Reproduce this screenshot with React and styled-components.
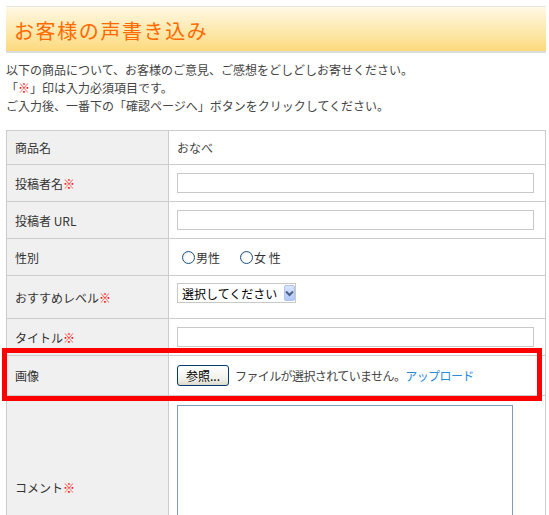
import React from 'react'
import styled, { createGlobalStyle } from 'styled-components'

const GlobalStyle = createGlobalStyle`
  body {
    margin: 0;
    background: #fff;
    color: #333;
    font-family: "Noto Sans CJK JP", "Noto Sans", sans-serif;
    font-size: 12px;
  }
`

const Page = styled.div`
  width: 540px;
  padding: 6px 0 0 6px;
`

const Header = styled.div`
  border-top: 1px solid #e6e6e6;
  border-bottom: 2px solid #dcdcdc;
  background: linear-gradient(#fff8e4, #fde7a8 60%, #fcd97c);
  display: flex;
  align-items: center;
  padding: 2px 0 0 8px;
  box-sizing: border-box;
  height: 47px;
`

const Title = styled.h1`
  margin: 0;
  font-size: 20px;
  font-weight: normal;
  letter-spacing: 1.6px;
  color: #ff6a00;
`

const Intro = styled.p`
  margin: 8px 0 15px;
  line-height: 18px;
  color: #444;
`

const Mark = styled.span`
  color: #f00;
`

const TableWrap = styled.div`
  position: relative;
`

const FormTable = styled.table`
  width: 540px;
  border-collapse: collapse;
  table-layout: fixed;
  border: 1px solid #cccccc;
`

const Label = styled.th`
  width: 145px;
  background: #f0f0f0;
  border: 1px solid #cccccc;
  text-align: left;
  font-weight: normal;
  color: #333;
  padding: 8px;
  line-height: 17px;
  vertical-align: middle;
`

const Value = styled.td`
  border: 1px solid #cccccc;
  padding: ${p => p.$pad || '8px'};
  line-height: 17px;
  color: #444;
  vertical-align: ${p => p.$top ? 'top' : 'middle'};
`

const TextInput = styled.input`
  display: block;
  width: 357px;
  height: 20px;
  box-sizing: border-box;
  border: 1px solid #c8c8c8;
  margin: 0;
  padding: 0 3px;
  font: inherit;
`

const RadioGroup = styled.div`
  display: flex;
  align-items: center;
  height: 20px;
  gap: 15px;
`

const RadioLabel = styled.label`
  display: flex;
  align-items: center;
  gap: 1px;
  color: #333;
`

const Radio = styled.input`
  appearance: none;
  width: 13px;
  height: 13px;
  margin: 0 0 0 5px;
  border: 1px solid #1c5180;
  border-radius: 50%;
  background: radial-gradient(circle at 60% 60%, #fff 40%, #dcdcd6 100%);
  box-sizing: border-box;
`

const SelectBox = styled.div`
  display: inline-flex;
  align-items: center;
  width: 119px;
  height: 20px;
  box-sizing: border-box;
  border: 1px solid #c8c8c8;
  padding: 0 1px 0 4px;
  gap: 5px;
  background: #fff;
`

const Select = styled.select`
  appearance: none;
  border: none;
  outline: none;
  background: transparent;
  font: inherit;
  color: #000;
  padding: 0;
  flex: 1;
`

const Arrow = styled.span`
  width: 16px;
  height: 16px;
  display: flex;
  align-items: center;
  justify-content: center;
  background: linear-gradient(#d9e5fd, #b1c7fa);
  border: 1px solid #b0c4f0;
  box-sizing: border-box;
  border-radius: 2px;
`

const FileRow = styled.div`
  display: flex;
  align-items: center;
  gap: 6px;
  height: 21px;
`

const BrowseButton = styled.button`
  width: 52px;
  height: 21px;
  border: 1px solid #003c74;
  border-radius: 3px;
  background: linear-gradient(#ffffff, #f0f0ea 70%, #dcd9cb);
  font: inherit;
  color: #000;
  padding: 0;
`

const FileNote = styled.span`
  color: #444;
  letter-spacing: -0.6px;
`

const Link = styled.a`
  color: #2a8bd6;
  text-decoration: none;
`

const Comment = styled.textarea`
  display: block;
  width: 336px;
  height: 166px;
  box-sizing: border-box;
  border: 1px solid #7f9db9;
  margin: 0;
  resize: none;
`

const Highlight = styled.div`
  position: absolute;
  left: -4px;
  top: 218px;
  width: 540px;
  height: 53px;
  box-sizing: border-box;
  border: 5px solid #ff0000;
  pointer-events: none;
`

const Req = () => <Mark>※</Mark>

export default function App() {
  return (
    <>
      <GlobalStyle />
      <Page>
        <Header>
          <Title>お客様の声書き込み</Title>
        </Header>
        <Intro>
          以下の商品について、お客様のご意見、ご感想をどしどしお寄せください。<br />
          「<Mark>※</Mark>」印は入力必須項目です。<br />
          ご入力後、一番下の「確認ページへ」ボタンをクリックしてください。
        </Intro>
        <TableWrap>
          <FormTable>
            <tbody>
              <tr>
                <Label>商品名</Label>
                <Value>おなべ</Value>
              </tr>
              <tr>
                <Label>投稿者名<Req /></Label>
                <Value><TextInput type="text" /></Value>
              </tr>
              <tr>
                <Label>投稿者 URL</Label>
                <Value><TextInput type="text" /></Value>
              </tr>
              <tr>
                <Label>性別</Label>
                <Value>
                  <RadioGroup>
                    <RadioLabel><Radio type="radio" name="sex" />男性</RadioLabel>
                    <RadioLabel><Radio type="radio" name="sex" />女 性</RadioLabel>
                  </RadioGroup>
                </Value>
              </tr>
              <tr>
                <Label>おすすめレベル<Req /></Label>
                <Value $pad="7px 8px 15px">
                  <SelectBox>
                    <Select defaultValue="">
                      <option value="">選択してください</option>
                    </Select>
                    <Arrow>
                      <svg width="9" height="7" viewBox="0 0 9 7">
                        <path d="M1 1.5 L4.5 5 L8 1.5" fill="none" stroke="#4d6185" strokeWidth="2" />
                      </svg>
                    </Arrow>
                  </SelectBox>
                </Value>
              </tr>
              <tr>
                <Label>タイトル<Req /></Label>
                <Value><TextInput type="text" /></Value>
              </tr>
              <tr>
                <Label>画像</Label>
                <Value $pad="9px 8px">
                  <FileRow>
                    <BrowseButton type="button">参照...</BrowseButton>
                    <FileNote>ファイルが選択されていません。<Link href="#">アップロード</Link></FileNote>
                  </FileRow>
                </Value>
              </tr>
              <tr>
                <Label>コメント<Req /></Label>
                <Value $pad="9px 8px 8px" $top><Comment /></Value>
              </tr>
            </tbody>
          </FormTable>
          <Highlight />
        </TableWrap>
      </Page>
    </>
  )
}
